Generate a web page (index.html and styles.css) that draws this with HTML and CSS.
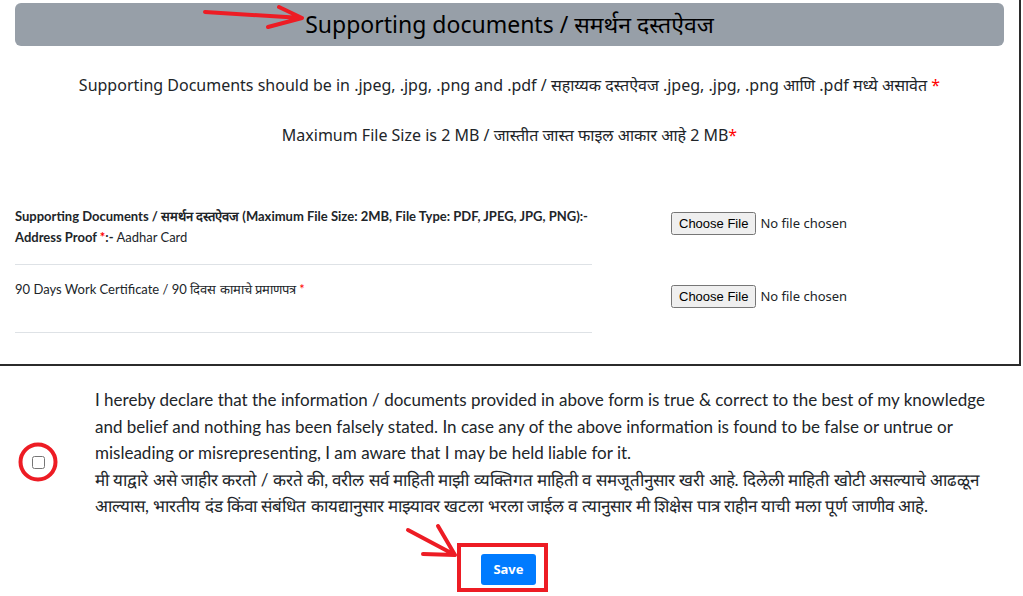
FILE: index.html
```html
<!DOCTYPE html>
<html lang="mr">
<head>
  <meta charset="UTF-8" />
  <meta name="viewport" content="width=device-width, initial-scale=1.0"/>
  <title>Supporting documents</title>
  <link rel="stylesheet" href="styles.css">
</head>
<body>

<div class="card">
  <div class="section-head">Supporting documents / समर्थन दस्तऐवज</div>

  <p class="note-line">Supporting Documents should be in .jpeg, .jpg, .png and .pdf / सहाय्यक दस्तऐवज .jpeg, .jpg, .png आणि .pdf मध्ये असावेत <span class="req">*</span></p>
  <p class="note-line second">Maximum File Size is 2 MB / जास्तीत जास्त फाइल आकार आहे 2 MB<span class="req">*</span></p>

  <div class="doc-list">
    <div class="doc-row">
      <div class="doc-label">
        <b>Supporting Documents / समर्थन दस्तऐवज (Maximum File Size: 2MB, File Type: PDF, JPEG, JPG, PNG):-</b><br>
        <b>Address Proof <span class="req">*</span>:-</b> Aadhar Card
      </div>
      <div class="doc-input"><input type="file" name="addressProof"></div>
    </div>
    <div class="doc-row">
      <div class="doc-label">90 Days Work Certificate / 90 दिवस कामाचे प्रमाणपत्र <span class="req">*</span></div>
      <div class="doc-input"><input type="file" name="workCertificate"></div>
    </div>
  </div>
</div>

<div class="declare">
  <div class="check-col"><input type="checkbox" id="agree"></div>
  <label class="declare-text" for="agree">
    I hereby declare that the information / documents provided in above form is true &amp; correct to the best of my knowledge and belief and nothing has been falsely stated. In case any of the above information is found to be false or untrue or misleading or misrepresenting, I am aware that I may be held liable for it.<br>
    <span class="mr">मी याद्वारे असे जाहीर करतो / करते की, वरील सर्व माहिती माझी व्यक्तिगत माहिती व समजूतीनुसार खरी आहे. दिलेली माहिती खोटी असल्याचे आढळून आल्यास, भारतीय दंड किंवा संबंधित कायद्यानुसार माझ्यावर खटला भरला जाईल व त्यानुसार मी शिक्षेस पात्र राहीन याची मला पूर्ण जाणीव आहे.</span>
  </label>
</div>

<div class="actions">
  <button class="save-btn" type="button">Save</button>
</div>

<!-- red markup drawn over the screenshot -->
<svg class="markup" width="1023" height="596" viewBox="0 0 1023 596">
  <g fill="none" stroke="#ed1c24" stroke-width="4" stroke-linecap="round" stroke-linejoin="round">
    <path d="M205 12 L302 18 M279 7 L302 18 L268 27" />
    <circle cx="38" cy="462" r="17.5" />
    <path d="M408 530 L455 555 M438 526 L455 555 L423 554" />
    <rect x="459" y="545" width="87" height="45" stroke-linecap="butt" stroke-linejoin="miter" />
  </g>
</svg>

</body>
</html>
```

FILE: styles.css
```css
body {
  margin: 0;
  min-height: 596px;
  font-family: 'Noto Sans', sans-serif;
  color: #212529;
  background: #fff;
  position: relative;
}

.card {
  width: 989px;
  padding: 3px 15px 31px 15px;
  border-right: 2px solid #2b2b2b;
  border-bottom: 2px solid #2b2b2b;
}

.section-head {
  background-color: #979fa8;
  border-radius: 6px;
  height: 43px;
  line-height: 43px;
  text-align: center;
  font-size: 23px;
  color: #000;
}

.note-line {
  margin: 27px 0 0;
  text-align: center;
  font-size: 16px;
  line-height: 24px;
}

.note-line.second {
  margin-top: 26px;
}

.req {
  color: #f00;
}

.doc-list {
  margin-top: 45px;
}

.doc-row {
  display: grid;
  grid-template-columns: 577px 1fr;
}

.doc-label {
  font-family: Lato, sans-serif;
  font-size: 13px;
  line-height: 21px;
  min-height: 37px;
  padding: 14px 0 16px;
  border-bottom: 1px solid #dee2e6;
  white-space: nowrap;
}

.doc-input {
  padding: 19px 0 0 79px;
}

.doc-input input {
  font-family: 'Noto Sans', sans-serif;
  font-size: 13px;
  color: #212529;
}

.doc-input input::file-selector-button {
  padding: 2px 6px;
}

.declare {
  display: flex;
  padding-top: 21px;
}

.check-col {
  flex: 0 0 95px;
  padding-top: 65px;
}

.check-col input {
  margin: 0 0 0 32px;
  width: 13px;
  height: 13px;
}

.declare-text {
  font-family: Lato, sans-serif;
  font-size: 17px;
  line-height: 26.5px;
  padding-right: 20px;
}

.actions {
  display: flex;
  justify-content: center;
  padding: 34px 6px 0 0;
}

.save-btn {
  background-color: #007bff;
  color: #fff;
  border: none;
  border-radius: 3px;
  height: 31px;
  padding: 0 12px;
  font-family: 'Noto Sans', sans-serif;
  font-size: 13px;
  font-weight: bold;
  cursor: pointer;
}

.markup {
  position: absolute;
  top: 0;
  left: 0;
  pointer-events: none;
}
```
